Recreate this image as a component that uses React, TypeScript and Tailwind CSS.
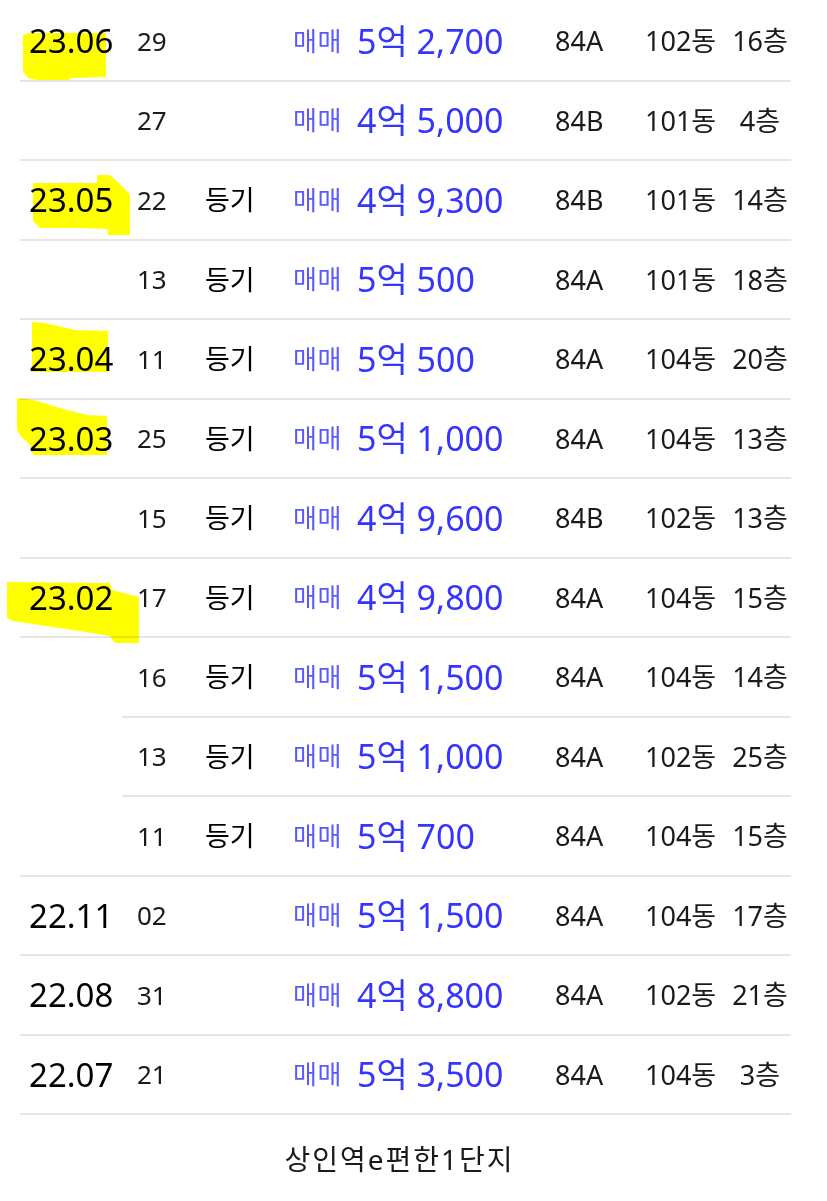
import React from "react";

type Row = {
  date?: string;
  day: string;
  reg: boolean;
  price: string;
  area: string;
  dong: string;
  floor: string;
  inset?: boolean;
};

const rows: Row[] = [
  { date: "23.06", day: "29", reg: false, price: "5억 2,700", area: "84A", dong: "102동", floor: "16층" },
  { day: "27", reg: false, price: "4억 5,000", area: "84B", dong: "101동", floor: "4층" },
  { date: "23.05", day: "22", reg: true, price: "4억 9,300", area: "84B", dong: "101동", floor: "14층" },
  { day: "13", reg: true, price: "5억 500", area: "84A", dong: "101동", floor: "18층" },
  { date: "23.04", day: "11", reg: true, price: "5억 500", area: "84A", dong: "104동", floor: "20층" },
  { date: "23.03", day: "25", reg: true, price: "5억 1,000", area: "84A", dong: "104동", floor: "13층" },
  { day: "15", reg: true, price: "4억 9,600", area: "84B", dong: "102동", floor: "13층" },
  { date: "23.02", day: "17", reg: true, price: "4억 9,800", area: "84A", dong: "104동", floor: "15층" },
  { day: "16", reg: true, price: "5억 1,500", area: "84A", dong: "104동", floor: "14층", inset: true },
  { day: "13", reg: true, price: "5억 1,000", area: "84A", dong: "102동", floor: "25층", inset: true },
  { day: "11", reg: true, price: "5억 700", area: "84A", dong: "104동", floor: "15층" },
  { date: "22.11", day: "02", reg: false, price: "5억 1,500", area: "84A", dong: "104동", floor: "17층" },
  { date: "22.08", day: "31", reg: false, price: "4억 8,800", area: "84A", dong: "102동", floor: "21층" },
  { date: "22.07", day: "21", reg: false, price: "5억 3,500", area: "84A", dong: "104동", floor: "3층" },
];

const font = { fontFamily: "'Noto Sans', 'Noto Sans CJK KR', sans-serif" };

function Highlights() {
  return (
    <svg
      className="pointer-events-none absolute left-0 top-0 mix-blend-multiply"
      width="827"
      height="1201"
      viewBox="0 0 827 1201"
    >
      <g fill="#ffff00">
        <polygon points="23,35 30,33 106,33 106,77 72,78 68,80 36,80 28,78 23,71" />
        <polygon points="33,183 97,183 97,175 110,175 122,186 130,195 130,235 108,235 107,229 80,228 40,228 33,221" />
        <polygon points="32,322 45,323 75,330 108,331 108,372 32,372" />
        <polygon points="17,398 33,400 67,410 87,415 107,416 107,455 33,455 30,445 20,435 17,430" />
        <polygon points="7,582 110,583 112,590 139,597 139,643 115,643 110,636 60,628 13,621 7,618" />
      </g>
    </svg>
  );
}

export default function App() {
  return (
    <div className="relative w-[827px] h-[1201px] bg-white overflow-hidden" style={font}>
      <div className="ml-[20px] w-[771px] pt-[2px]">
        {rows.map((r, i) => (
          <div key={i} className="flex flex-col">
            <div className="grid h-[77.5px] grid-cols-[117px_68px_88px_64px_198px_90px_78px_74px] items-center text-[#1a1a1a] whitespace-nowrap">
              <div className="pl-[9px] text-[33px] text-black leading-none">{r.date ?? ""}</div>
              <div className="text-[26px] leading-none">{r.day}</div>
              <div className="text-[27px] leading-none text-black">{r.reg ? "등기" : ""}</div>
              <div className="text-[26px] leading-none text-[#5a5aff] tracking-[0.5px]">매매</div>
              <div className="text-[34px] leading-none text-[#3535ff]">{r.price}</div>
              <div className="text-[27px] leading-none">{r.area}</div>
              <div className="text-[27px] leading-none">{r.dong}</div>
              <div className="text-[27px] leading-none text-center">{r.floor}</div>
            </div>
            <div className={r.inset ? "ml-[102px] h-[2px] bg-[#e6e6e6]" : "h-[2px] bg-[#e6e6e6]"} />
          </div>
        ))}
      </div>
      <div className="ml-[14px] w-[771px] mt-[30px] text-center text-[28px] leading-none tracking-[2px] text-[#1a1a1a]">
        상인역e편한1단지
      </div>
      <Highlights />
    </div>
  );
}
